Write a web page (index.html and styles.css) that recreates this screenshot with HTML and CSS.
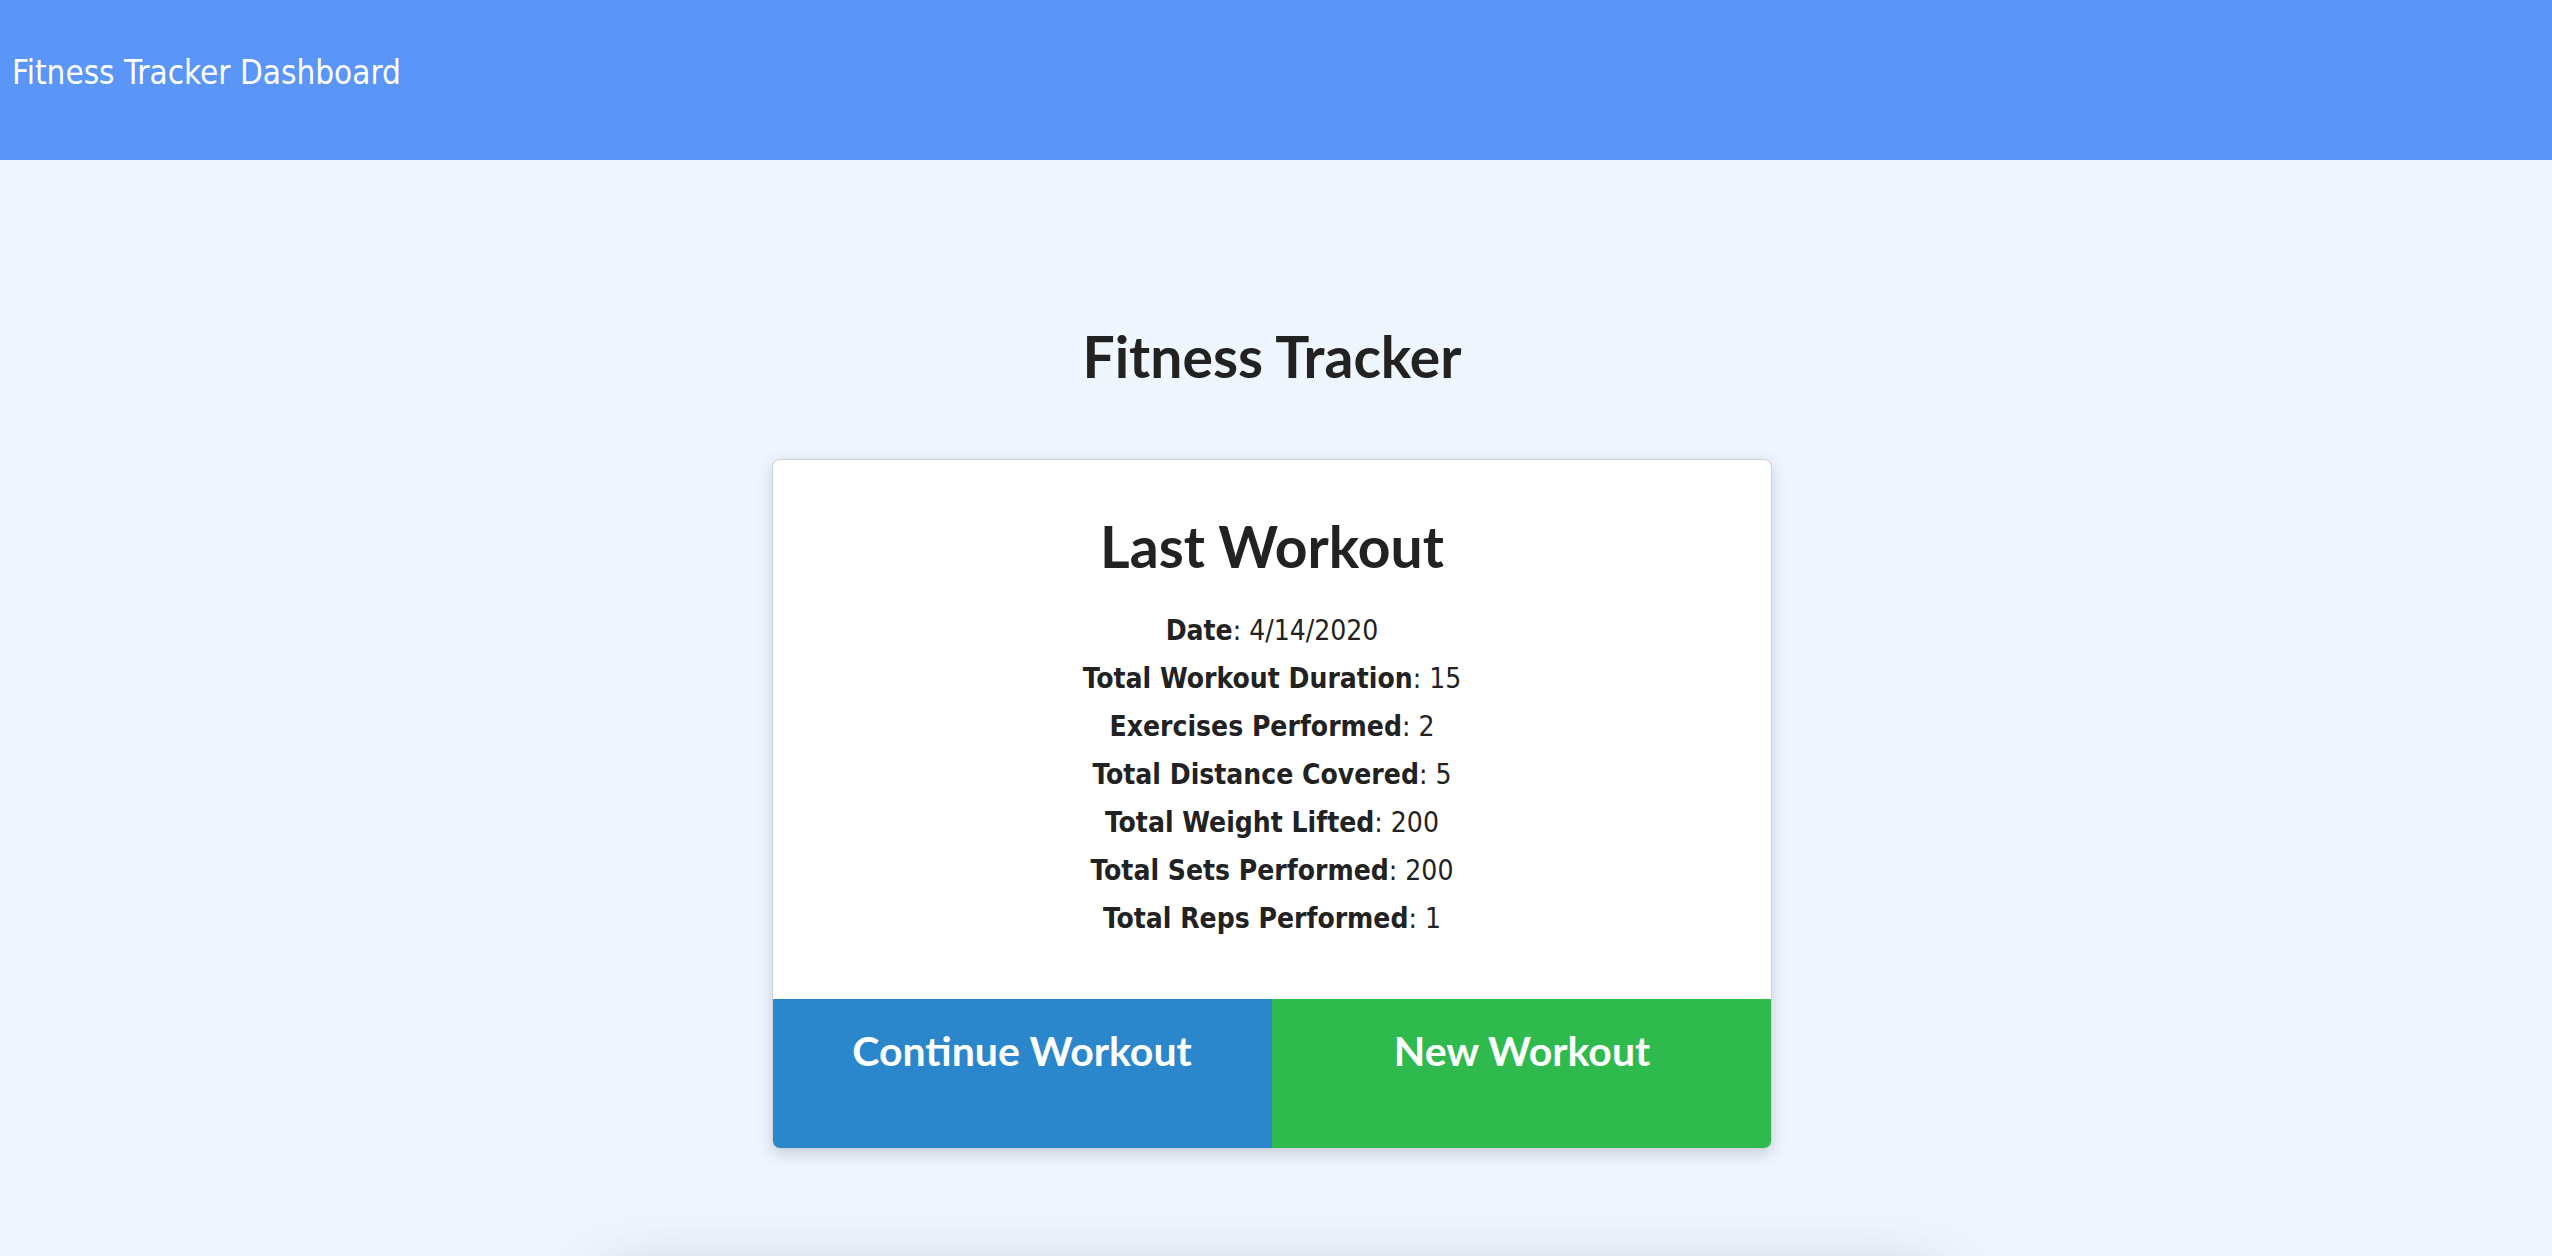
FILE: index.html
```html
<!DOCTYPE html>
<html lang="en">
<head>
    <meta charset="UTF-8">
    <meta name="viewport" content="width=device-width, initial-scale=1.0">
    <title>Fitness Tracker Dashboard</title>
    <link rel="stylesheet" href="styles.css">
</head>
<body>

    <header class="topbar">
        <span class="brand">Fitness Tracker Dashboard</span>
    </header>

    <main class="main">
        <h1 class="page-title">Fitness Tracker</h1>

        <div class="card">
            <div class="card-body">
                <h2 class="card-title">Last Workout</h2>
                <ul class="stats">
                    <li><strong>Date</strong>: 4/14/2020</li>
                    <li><strong>Total Workout Duration</strong>: 15</li>
                    <li><strong>Exercises Performed</strong>: 2</li>
                    <li><strong>Total Distance Covered</strong>: 5</li>
                    <li><strong>Total Weight Lifted</strong>: 200</li>
                    <li><strong>Total Sets Performed</strong>: 200</li>
                    <li><strong>Total Reps Performed</strong>: 1</li>
                </ul>
            </div>
            <div class="actions">
                <a class="btn btn-continue" href="#">Continue Workout</a>
                <a class="btn btn-new" href="#">New Workout</a>
            </div>
        </div>

        <div class="charts"></div>
    </main>

</body>
</html>
```

FILE: styles.css
```css
* {
    margin: 0;
    padding: 0;
    box-sizing: border-box;
}

body {
    background: #eff6fe;
    color: #222;
    font-family: "DejaVu Sans Condensed", "DejaVu Sans", sans-serif;
    overflow: hidden;
}

.topbar {
    height: 160px;
    background: #5a95f8;
    padding: 53px 12px 0;
}

.brand {
    color: white;
    font-size: 33px;
}

.main {
    padding-right: 8px;
    display: flex;
    flex-direction: column;
    align-items: center;
}

.page-title {
    margin-top: 162px;
    font-family: Lato, sans-serif;
    font-size: 57px;
    line-height: 1.2;
    font-weight: bold;
    color: #222;
}

.card {
    margin-top: 69px;
    width: 1000px;
    background: white;
    border: 1px solid #d2d2d2;
    border-radius: 8px;
    overflow: hidden;
    box-shadow: 0 5px 16px rgba(60, 70, 100, 0.22);
}

.card-body {
    padding: 52px 20px 56px;
    text-align: center;
}

.card-title {
    font-family: Lato, sans-serif;
    font-size: 57px;
    line-height: 1.2;
    font-weight: bold;
}

.stats {
    list-style: none;
    margin-top: 26px;
    font-size: 28px;
    line-height: 48px;
}

.actions {
    display: flex;
    margin: 0 -1px -1px;
}

.btn {
    flex: 1;
    height: 150px;
    padding-top: 27px;
    text-align: center;
    font-family: Lato, sans-serif;
    font-size: 41px;
    font-weight: bold;
    line-height: 1.2;
    color: white;
    text-decoration: none;
}

.btn-continue {
    background: #2a87cc;
}

.btn-new {
    background: #2fba4e;
}

.charts {
    margin-top: 130px;
    width: 1360px;
    height: 400px;
    background: #eff6fe;
    border-radius: 40px;
    box-shadow: 0 0 70px rgba(60, 70, 110, 0.3);
}
```
